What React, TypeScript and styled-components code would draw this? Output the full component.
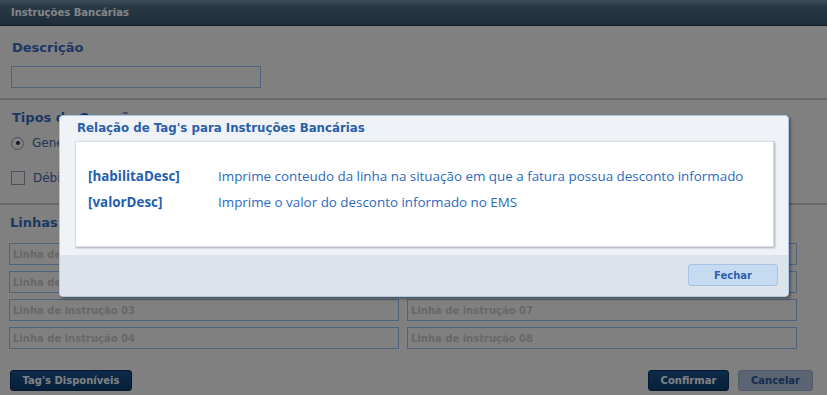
import React from "react";
import styled, { createGlobalStyle } from "styled-components";

const Global = createGlobalStyle`
  html, body { margin: 0; padding: 0; background: #e9e9e9; }
  body { font-family: "DejaVu Sans", Verdana, sans-serif; }
  * { box-sizing: border-box; }
`;

const Page = styled.div`
  width: 827px;
  height: 395px;
  position: relative;
  overflow: hidden;
  background: #e9e9e9;
`;

const TopBar = styled.div`
  height: 26px;
  background: linear-gradient(#7790a8 0%, #4c6880 25%, #375269 100%);
  border-bottom: 1px solid #243848;
  display: flex;
  align-items: center;
  padding-left: 11px;
  color: #eef3f8;
  font-weight: bold;
  font-size: 10px;
`;

const Section = styled.section<{ $top: number; $bottom: number }>`
  padding: ${(p) => `${p.$top}px 11px ${p.$bottom}px`};
  border-bottom: 2px solid #bdbdbd;
`;

const Heading = styled.h2`
  margin: 0;
  padding-left: 1px;
  font-size: 13px;
  font-weight: bold;
  color: #3366b4;
  line-height: 16px;
`;

const TextBox = styled.div`
  width: 250px;
  height: 22px;
  margin-top: 10px;
  border: 1px solid #8db4e6;
`;

const OptionRow = styled.div<{ $gap: number }>`
  display: flex;
  align-items: center;
  gap: 8px;
  height: 14px;
  margin-top: ${(p) => p.$gap}px;
  color: #3764a4;
  font-size: 12px;
`;

const Radio = styled.span`
  width: 13px;
  height: 13px;
  border-radius: 50%;
  border: 1px solid #8694aa;
  display: flex;
  align-items: center;
  justify-content: center;
  &::after {
    content: "";
    width: 4px;
    height: 4px;
    border-radius: 50%;
    background: #1c2a40;
  }
`;

const Check = styled.span`
  width: 14px;
  height: 14px;
  border: 1px solid #8694aa;
`;

const LinesSection = styled.section`
  padding: 10px 9px 0;
`;

const Grid = styled.div`
  display: grid;
  grid-template-columns: 390px 390px;
  column-gap: 8px;
  row-gap: 6px;
  margin-top: 12px;
`;

const LineInput = styled.div`
  height: 22px;
  border: 1px solid #8db4e6;
  font-size: 10px;
  font-weight: bold;
  color: #bdbdbd;
  display: flex;
  align-items: center;
  padding-left: 3px;
`;

const Actions = styled.div`
  display: flex;
  align-items: center;
  padding: 21px 14px 0 10px;
  gap: 9px;
`;

const Spacer = styled.div`
  flex: 1;
`;

const Btn = styled.button<{ $w: number; $variant?: "dark" | "light" }>`
  width: ${(p) => p.$w}px;
  height: 21px;
  border-radius: 3px;
  font-family: "DejaVu Sans", Verdana, sans-serif;
  font-weight: bold;
  font-size: 10px;
  padding: 0;
  cursor: pointer;
  ${(p) =>
    p.$variant === "light"
      ? `background: #a4b6d1; border: 1px solid #93a8c8; color: #2a5390;`
      : `background: linear-gradient(#1b4d88, #0c3a6c); border: 1px solid #0a2f58; color: #e6ecf2;`}
`;

const Overlay = styled.div`
  position: absolute;
  inset: 0;
  background: rgba(0, 0, 0, 0.45);
`;

const Modal = styled.div`
  position: absolute;
  left: 59px;
  top: 115px;
  width: 730px;
  height: 182px;
  background: #eff3f8;
  border: 1px solid #a9c8ea;
  border-radius: 4px;
  box-shadow: 2px 2px 3px rgba(0, 0, 0, 0.35);
  display: flex;
  flex-direction: column;
  overflow: hidden;
`;

const ModalTitle = styled.div`
  height: 25px;
  padding: 5px 0 0 17px;
  font-size: 11.8px;
  font-weight: bold;
  color: #2a5fa8;
`;

const ModalBody = styled.div`
  margin: 0 14px 0 15px;
  height: 106px;
  background: #ffffff;
  border: 1px solid #d6dde5;
  box-shadow: 1px 1px 2px rgba(0, 0, 0, 0.3);
  padding: 25px 0 0 12px;
  display: flex;
  flex-direction: column;
  gap: 8px;
`;

const TagRow = styled.div`
  display: flex;
  align-items: center;
  height: 18px;
  font-family: "Open Sans", "Segoe UI", sans-serif;
  font-size: 13.4px;
  color: #2c6ac0;
  white-space: nowrap;
`;

const TagName = styled.span`
  width: 130px;
  flex: none;
  font-weight: 700;
  color: #245eb0;
`;

const ModalFooter = styled.div`
  margin-top: 8px;
  flex: 1;
  background: #dde3eb;
  display: flex;
  justify-content: flex-end;
  padding: 9px 10px 0 0;
`;

const CloseBtn = styled.button`
  width: 90px;
  height: 22px;
  border-radius: 3px;
  background: #c6dbf2;
  border: 1px solid #a7c4e4;
  color: #2f5fa6;
  font-family: "DejaVu Sans", Verdana, sans-serif;
  font-weight: bold;
  font-size: 10px;
  padding: 0;
`;

const tags = [
  ["[habilitaDesc]", "Imprime conteudo da linha na situação em que a fatura possua desconto informado"],
  ["[valorDesc]", "Imprime o valor do desconto informado no EMS"],
];

export default function App() {
  const lines = [1, 5, 2, 6, 3, 7, 4, 8];
  return (
    <Page>
      <Global />
      <TopBar>Instruções Bancárias</TopBar>
      <Section $top={14} $bottom={10}>
        <Heading>Descrição</Heading>
        <TextBox />
      </Section>
      <Section $top={10} $bottom={18}>
        <Heading>Tipos de Geração</Heading>
        <OptionRow $gap={10}>
          <Radio />
          <span>Genérico</span>
        </OptionRow>
        <OptionRow $gap={21}>
          <Check />
          <span>Débito Automático</span>
        </OptionRow>
      </Section>
      <LinesSection>
        <Heading>Linhas de Instrução</Heading>
        <Grid>
          {lines.map((n) => (
            <LineInput key={n}>Linha de instrução 0{n}</LineInput>
          ))}
        </Grid>
      </LinesSection>
      <Actions>
        <Btn $w={122}>Tag's Disponíveis</Btn>
        <Spacer />
        <Btn $w={81}>Confirmar</Btn>
        <Btn $w={75} $variant="light">Cancelar</Btn>
      </Actions>
      <Overlay />
      <Modal>
        <ModalTitle>Relação de Tag's para Instruções Bancárias</ModalTitle>
        <ModalBody>
          {tags.map(([t, d]) => (
            <TagRow key={t}>
              <TagName>{t}</TagName>
              <span>{d}</span>
            </TagRow>
          ))}
        </ModalBody>
        <ModalFooter>
          <CloseBtn>Fechar</CloseBtn>
        </ModalFooter>
      </Modal>
    </Page>
  );
}
